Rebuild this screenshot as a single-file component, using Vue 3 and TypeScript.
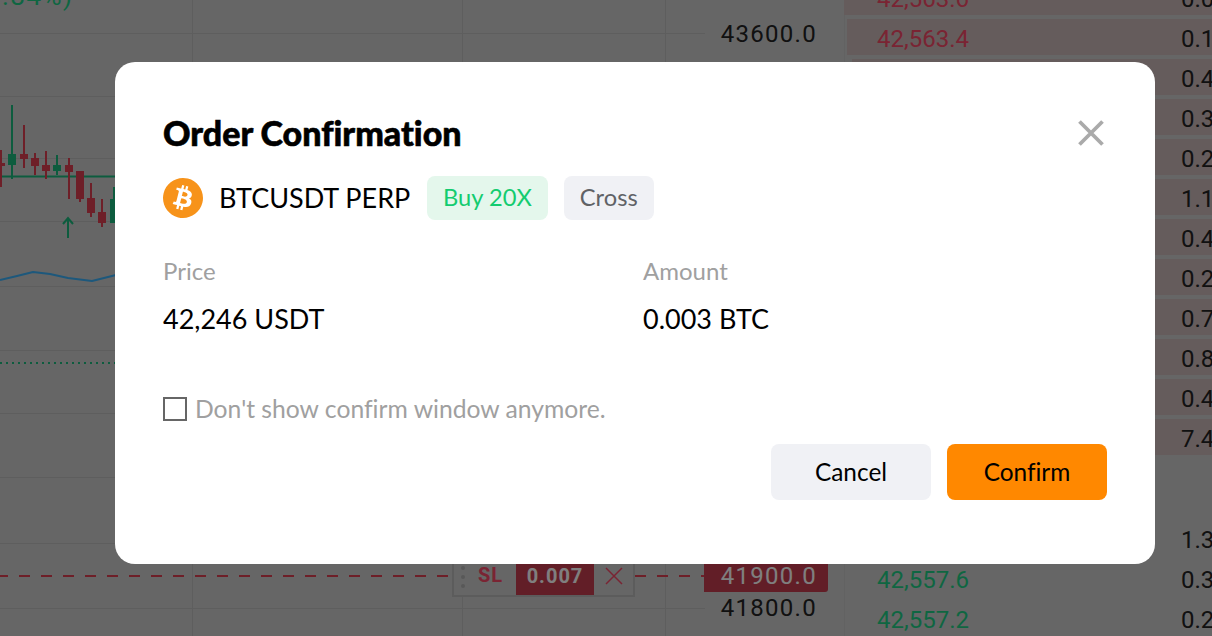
<script setup lang="ts">
interface BookRow {
  price: string
  qty: string
  depth: number
}

const asks: BookRow[] = [
  { price: '42,563.6', qty: '0.0', depth: 368 },
  { price: '42,563.4', qty: '0.1', depth: 365 },
  { price: '42,563.2', qty: '0.4', depth: 360 },
  { price: '42,563.0', qty: '0.3', depth: 367 },
  { price: '42,562.8', qty: '0.2', depth: 367 },
  { price: '42,562.6', qty: '1.1', depth: 367 },
  { price: '42,562.4', qty: '0.4', depth: 367 },
  { price: '42,562.2', qty: '0.2', depth: 367 },
  { price: '42,562.0', qty: '0.7', depth: 367 },
  { price: '42,561.8', qty: '0.8', depth: 367 },
  { price: '42,561.6', qty: '0.4', depth: 367 },
  { price: '42,561.4', qty: '7.4', depth: 367 },
]

const bids: BookRow[] = [
  { price: '42,558.0', qty: '1.3', depth: 0 },
  { price: '42,557.6', qty: '0.3', depth: 0 },
  { price: '42,557.2', qty: '0.2', depth: 0 },
]

const gridY = [33, 96, 158, 221, 286, 350, 413, 477, 543, 608]
const gridX = [192, 462, 665]

interface Candle {
  x: number
  top: number
  bottom: number
  bodyTop: number
  bodyBottom: number
  up: boolean
}

const candles: Candle[] = [
  { x: 1, top: 150, bottom: 187, bodyTop: 163, bodyBottom: 166, up: false },
  { x: 12, top: 105, bottom: 179, bodyTop: 154, bodyBottom: 165, up: true },
  { x: 24, top: 125, bottom: 168, bodyTop: 154, bodyBottom: 159, up: false },
  { x: 35, top: 153, bottom: 175, bodyTop: 158, bodyBottom: 166, up: false },
  { x: 46, top: 151, bottom: 179, bodyTop: 165, bodyBottom: 171, up: false },
  { x: 57, top: 155, bottom: 175, bodyTop: 165, bodyBottom: 171, up: true },
  { x: 69, top: 158, bottom: 199, bodyTop: 165, bodyBottom: 172, up: false },
  { x: 80, top: 171, bottom: 202, bodyTop: 171, bodyBottom: 199, up: false },
  { x: 91, top: 183, bottom: 217, bodyTop: 198, bodyBottom: 213, up: false },
  { x: 102, top: 199, bottom: 227, bodyTop: 212, bodyBottom: 223, up: false },
  { x: 114, top: 187, bottom: 223, bodyTop: 199, bodyBottom: 223, up: true },
]
</script>

<template>
  <div class="page">
    <div class="chart">
      <svg class="plot" width="705" height="636" viewBox="0 0 705 636">
        <line v-for="y in gridY" :key="y" x1="0" x2="705" :y1="y + 0.5" :y2="y + 0.5" class="grid" />
        <line v-for="x in gridX" :key="x" :x1="x + 0.5" :x2="x + 0.5" y1="0" y2="636" class="grid" />
        <line x1="0" x2="705" y1="176.5" y2="176.5" class="green-line" />
        <template v-for="c in candles" :key="c.x">
          <line :x1="c.x" :x2="c.x" :y1="c.top" :y2="c.bottom" :stroke="c.up ? '#1ab87c' : '#dc3e50'" stroke-width="2" />
          <rect :x="c.x - 4" :y="c.bodyTop" width="8" :height="c.bodyBottom - c.bodyTop" :fill="c.up ? '#1ab87c' : '#dc3e50'" />
        </template>
        <path d="M68 238V218M63 224l5-6 5 6" fill="none" stroke="#1ab87c" stroke-width="2" />
        <polyline points="0,280 17,276 33,272 50,274 68,278 92,281 116,275" fill="none" stroke="#3ab0f8" stroke-width="2" stroke-linejoin="round" />
        <line x1="0" x2="705" y1="363" y2="363" stroke="#1ab87c" stroke-width="2" stroke-dasharray="2 4" />
        <line x1="0" x2="705" y1="576" y2="576" stroke="#dc3e50" stroke-width="2" stroke-dasharray="11 11" stroke-dashoffset="3" />
      </svg>
      <div class="change">.84%)</div>
      <div class="sl-order">
        <i class="grip"></i>
        <span class="sl-label">SL</span>
        <span class="sl-qty">0.007</span>
        <svg class="sl-close" width="18" height="18" viewBox="0 0 18 18">
          <path d="M1 1l16 16M17 1L1 17" stroke="#f44866" stroke-width="1.5" />
        </svg>
      </div>
      <div class="axis">
        <span class="tick t1">43600.0</span>
        <span class="tick current">41900.0</span>
        <span class="tick t2">41800.0</span>
      </div>
    </div>

    <div class="book">
      <div class="asks">
        <div v-for="row in asks" :key="row.price" class="book-row">
          <i class="depth" :style="{ width: row.depth + 'px' }"></i>
          <span class="price red">{{ row.price }}</span>
          <span class="qty">{{ row.qty }}</span>
        </div>
      </div>
      <div class="bids">
        <div v-for="row in bids" :key="row.price" class="book-row">
          <span class="price green">{{ row.price }}</span>
          <span class="qty">{{ row.qty }}</span>
        </div>
      </div>
    </div>

    <div class="overlay">
      <div class="modal">
        <div class="modal-head">
          <h2>Order Confirmation</h2>
          <svg class="close" width="26" height="26" viewBox="0 0 26 26">
            <path d="M1.5 1.5l23 23M24.5 1.5l-23 23" stroke="#aaaaaa" stroke-width="3.8" />
          </svg>
        </div>

        <div class="symbol">
          <svg class="coin" width="40" height="40" viewBox="0 0 24 24">
            <circle cx="12" cy="12" r="9" fill="#fff" />
            <path
              fill="#f7931a"
              d="M23.638 14.904c-1.602 6.43-8.113 10.34-14.542 8.736C2.67 22.05-1.244 15.525.362 9.105 1.962 2.67 8.475-1.243 14.9.358c6.43 1.605 10.342 8.115 8.738 14.548v-.002zm-6.35-4.613c.24-1.59-.974-2.45-2.64-3.03l.54-2.153-1.315-.33-.525 2.107c-.345-.087-.705-.167-1.064-.25l.526-2.127-1.32-.33-.54 2.165c-.285-.067-.565-.132-.84-.2l-1.815-.45-.35 1.407s.975.225.955.236c.535.136.63.486.615.766l-1.477 5.92c-.075.166-.24.406-.614.314.015.02-.96-.24-.96-.24l-.66 1.51 1.71.426.93.242-.54 2.19 1.32.327.54-2.17c.36.1.705.19 1.05.273l-.51 2.154 1.32.33.545-2.19c2.24.427 3.93.257 4.64-1.774.57-1.637-.03-2.58-1.217-3.196.854-.193 1.5-.76 1.68-1.93h.01zm-3.01 4.22c-.404 1.64-3.157.75-4.05.53l.72-2.9c.896.23 3.757.67 3.33 2.37zm.41-4.24c-.37 1.49-2.662.735-3.405.55l.654-2.64c.744.18 3.137.524 2.75 2.084v.006z"
            />
          </svg>
          <span class="pair">BTCUSDT PERP</span>
          <span class="tag buy">Buy 20X</span>
          <span class="tag cross">Cross</span>
        </div>

        <div class="details">
          <div>
            <div class="label">Price</div>
            <div class="value">42,246 USDT</div>
          </div>
          <div>
            <div class="label">Amount</div>
            <div class="value">0.003 BTC</div>
          </div>
        </div>

        <label class="remember">
          <span class="box"></span>
          <span>Don't show confirm window anymore.</span>
        </label>

        <div class="actions">
          <button class="btn cancel">Cancel</button>
          <button class="btn confirm">Confirm</button>
        </div>
      </div>
    </div>
  </div>
</template>

<style>
body {
  background: #fff;
  overflow: hidden;
}
</style>

<style scoped>
.page {
  position: relative;
  display: flex;
  width: 1212px;
  height: 636px;
  overflow: hidden;
  background: #ccc;
  font-family: 'Roboto', 'Liberation Sans', sans-serif;
}

.chart {
  position: relative;
  width: 845px;
  flex: none;
  box-sizing: border-box;
  border-right: 1px solid #c4c4c4;
}

.plot {
  position: absolute;
  left: 0;
  top: 0;
}

.grid {
  stroke: #bcbcbc;
  stroke-width: 1;
}

.green-line {
  stroke: #1ab87c;
  stroke-width: 2;
}

.change {
  position: absolute;
  left: 2px;
  top: -18px;
  font-size: 26px;
  line-height: 28px;
  letter-spacing: 1.5px;
  color: #1ecc84;
}

.sl-order {
  position: absolute;
  left: 452px;
  top: 552px;
  width: 183px;
  height: 45px;
  box-sizing: border-box;
  display: flex;
  align-items: center;
  border: 2px solid #b8b8b8;
  background: #ccc;
}

.grip {
  position: absolute;
  left: 7px;
  top: 12px;
  bottom: 7px;
  border-left: 4px dotted #b0b0b0;
}

.sl-label {
  width: 62px;
  padding-left: 24px;
  box-sizing: border-box;
  font-size: 20px;
  font-weight: 700;
  letter-spacing: 1px;
  color: #f44866;
}

.sl-qty {
  width: 78px;
  height: 100%;
  line-height: 45px;
  text-align: center;
  font-size: 20px;
  font-weight: 700;
  letter-spacing: 1px;
  background: #c43c4e;
  color: #fff;
}

.sl-close {
  margin: 3px 0 0 11px;
}

.axis {
  position: absolute;
  left: 704px;
  top: 0;
  width: 124px;
  height: 100%;
}

.tick {
  position: absolute;
  left: 0;
  width: 124px;
  box-sizing: border-box;
  padding-right: 11px;
  text-align: right;
  font-size: 24px;
  line-height: 28px;
  letter-spacing: 1.3px;
  color: #222;
}

.t1 {
  top: 20px;
}

.t2 {
  top: 594px;
}

.current {
  top: 564px;
  height: 28px;
  line-height: 24px;
  border-radius: 0 0 3px 0;
  background: #c43c4e;
  color: #fff;
}

.book {
  flex: 1;
  min-width: 0;
  margin-top: -21px;
}

.bids {
  margin-top: 67px;
}

.asks .price,
.asks .qty {
  top: 2px;
}

.book-row {
  position: relative;
  display: flex;
  justify-content: space-between;
  align-items: center;
  height: 36px;
  margin-bottom: 4px;
  padding-left: 32px;
  font-size: 24px;
  line-height: 36px;
  color: #222;
}

.depth {
  position: absolute;
  right: 0;
  top: 0;
  bottom: 0;
  background: #cab8b8;
}

.price,
.qty {
  position: relative;
}

.qty {
  width: 31px;
  overflow: hidden;
  white-space: nowrap;
}

.red {
  color: #f44866;
}

.green {
  color: #1ecc84;
}

.overlay {
  position: absolute;
  inset: 0;
  background: rgba(0, 0, 0, 0.5);
}

.modal {
  width: 1040px;
  height: 502px;
  margin: 62px 0 0 115px;
  box-sizing: border-box;
  padding: 48px 48px 64px;
  border-radius: 20px;
  background: #fff;
  color: #000;
  font-family: 'Lato', 'Roboto', sans-serif;
  font-variant-ligatures: none;
  display: flex;
  flex-direction: column;
}

.modal-head {
  display: flex;
  align-items: center;
  justify-content: space-between;
  height: 46px;
}

.modal-head h2 {
  margin: 0;
  font-size: 34px;
  line-height: 46px;
  font-weight: 900;
  -webkit-text-stroke: 0.6px #000;
}

.close {
  margin-right: 3px;
}

.symbol {
  display: flex;
  align-items: center;
  gap: 16px;
  margin-top: 20px;
  height: 44px;
  font-size: 27px;
}

.pair {
  min-width: 192px;
  padding-bottom: 2px;
}

.tag {
  height: 44px;
  padding: 0 16px;
  border-radius: 8px;
  font-size: 23.7px;
  line-height: 42px;
}

.buy {
  background: #e4f7ec;
  color: #14cc70;
}

.cross {
  background: #f0f1f5;
  color: #606266;
}

.details {
  display: grid;
  grid-template-columns: 480px 1fr;
  margin-top: 33px;
}

.label {
  font-size: 24px;
  line-height: 36px;
  color: #a0a0a0;
}

.value {
  margin-top: 12px;
  font-size: 27px;
  line-height: 36px;
}

.remember {
  display: flex;
  align-items: center;
  gap: 8px;
  margin-top: 58px;
  font-size: 24.7px;
  line-height: 28px;
  color: #a0a0a0;
}

.box {
  width: 24px;
  height: 24px;
  box-sizing: border-box;
  border: 2px solid #666;
}

.actions {
  display: flex;
  justify-content: flex-end;
  gap: 16px;
  margin-top: auto;
}

.btn {
  width: 160px;
  height: 56px;
  padding: 0 0 2px;
  border: 0;
  border-radius: 8px;
  font: inherit;
  font-size: 24.4px;
  color: #000;
}

.cancel {
  background: #f0f1f5;
}

.confirm {
  background: #ff8800;
}
</style>
